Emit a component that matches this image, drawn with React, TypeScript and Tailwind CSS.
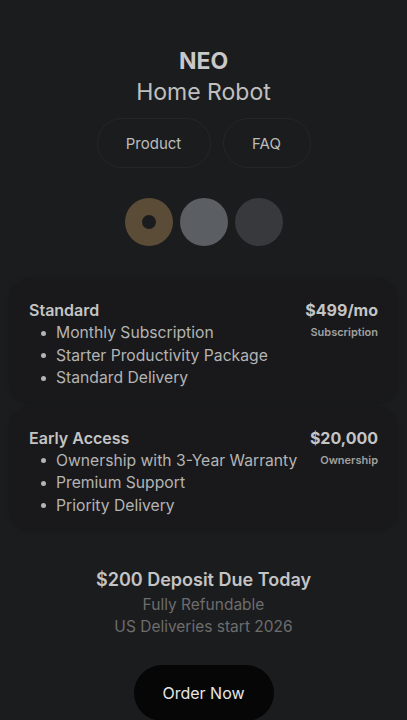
const plans = [
  {
    name: "Standard",
    price: "$499/mo",
    kind: "Subscription",
    features: ["Monthly Subscription", "Starter Productivity Package", "Standard Delivery"],
  },
  {
    name: "Early Access",
    price: "$20,000",
    kind: "Ownership",
    features: ["Ownership with 3-Year Warranty", "Premium Support", "Priority Delivery"],
  },
];

export default function App() {
  return (
    <div
      className="min-h-[720px] bg-[#1b1c1e] pt-[47px] text-[#c4c4c4]"
      style={{ fontFamily: "Inter, 'Liberation Sans', sans-serif" }}
    >
      {/* Header */}
      <div className="flex flex-col items-center">
        <h1 className="text-[23px] font-bold leading-[29px] text-[#c8c8c8]">NEO</h1>
        <h2 className="mt-[1px] text-[23px] leading-[30px] text-[#c0c0c0]">Home Robot</h2>
        <div className="mt-[11px] flex gap-[12px]">
          <button className="h-[50px] w-[114px] rounded-full border border-[#252628] pt-[2px] text-[15px] text-[#bcbcbc]">
            Product
          </button>
          <button className="h-[50px] w-[88px] rounded-full border border-[#252628] pt-[2px] text-[15px] text-[#bcbcbc]">
            FAQ
          </button>
        </div>

        {/* Colour swatches */}
        <div className="mt-[30px] flex gap-[7px]">
          <div className="flex h-[48px] w-[48px] items-center justify-center rounded-full bg-[#5b4c37]">
            <div className="h-[14px] w-[14px] rounded-full bg-[#1b1c1e]" />
          </div>
          <div className="h-[48px] w-[48px] rounded-full bg-[#5b5f63]" />
          <div className="h-[48px] w-[48px] rounded-full bg-[#37393c]" />
        </div>
      </div>

      {/* Plans */}
      <div className="mt-[33px] flex flex-col gap-[3px] px-[9px]">
        {plans.map(({ name, price, kind, features }) => (
          <div
            key={name}
            className="flex justify-between rounded-[22px] bg-[#19191b] px-[20px] pb-[14px] pt-[20px] shadow-[0_0_4px_rgba(0,0,0,0.15)]"
          >
            <div>
              <h3 className="text-[16px] font-semibold leading-[22px] text-[#c4c4c4]">{name}</h3>
              <ul className="mt-[1px]">
                {features.map((f) => (
                  <li key={f} className="flex items-center text-[15.7px] leading-[22.5px] text-[#b4b4b4]">
                    <span className="ml-[12px] mr-[10px] h-[5px] w-[5px] rounded-full bg-[#b4b4b4]" />
                    {f}
                  </li>
                ))}
              </ul>
            </div>
            <div className="flex flex-col items-end">
              <span className="text-[16px] font-bold leading-[22px] text-[#c4c4c4]">{price}</span>
              <span className="mt-[3px] text-[11px] font-semibold leading-[16px] text-[#a0a0a0]">{kind}</span>
            </div>
          </div>
        ))}
      </div>

      {/* Deposit */}
      <div className="mt-[36px] flex flex-col items-center">
        <p className="text-[18px] font-semibold leading-[26px] text-[#c4c4c4]">$200 Deposit Due Today</p>
        <p className="mt-[1px] text-[15.5px] leading-[22px] text-[#6d6d6d]">Fully Refundable</p>
        <p className="text-[15.5px] leading-[22px] text-[#6d6d6d]">US Deliveries start 2026</p>
        <button className="mt-[27px] h-[56px] w-[140px] rounded-full bg-[#060606] text-[16px] text-[#e6e6e6]">
          Order Now
        </button>
      </div>
    </div>
  );
}
